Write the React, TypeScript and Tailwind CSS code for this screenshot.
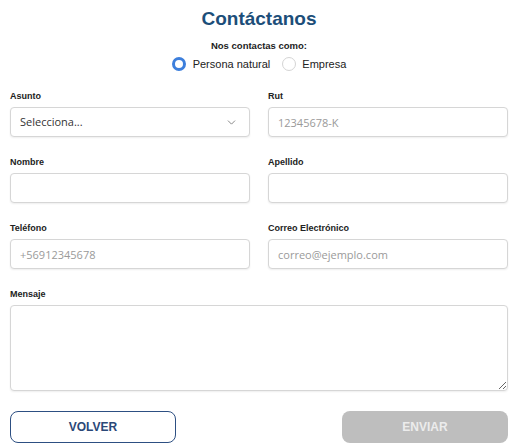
import { ChevronDown } from "lucide-react";

const Label = ({ children }: { children: React.ReactNode }) => (
  <label className="block text-[9px] leading-[12px] font-bold text-[#222]">
    {children}
  </label>
);

const inputCls =
  "mt-[5px] w-full h-[30px] px-[9px] rounded-[4px] border border-[#d6d6d6] bg-white text-[11px] text-[#333] placeholder:text-[#9a9a9a] shadow-[0_1px_2px_rgba(0,0,0,0.07)] outline-none";

const App = () => {
  return (
    <div className="w-[515px] min-h-[448px] bg-white pl-[10px] pr-[7px] pt-[8px] pb-[4px] font-['Liberation_Sans',Arial,sans-serif]">
      <h1 className="text-center text-[19px] leading-[22px] font-bold text-[#1c4e79]">
        Contáctanos
      </h1>
      <p className="mt-[10px] text-center text-[9.5px] leading-[12px] font-bold text-[#222]">
        Nos contactas como:
      </p>

      <div className="mt-[4px] flex justify-center items-center h-[16px] text-[11px] text-[#222]">
        <div className="flex items-center gap-[7px]">
          <span className="w-[14px] h-[14px] rounded-full border-[3px] border-[#3d7fdc] bg-white" />
          <span>Persona natural</span>
        </div>
        <div className="flex items-center gap-[6px] ml-[12px]">
          <span className="w-[14px] h-[14px] rounded-full border border-[#d4d4d4] bg-white" />
          <span>Empresa</span>
        </div>
      </div>

      <div className="mt-[18px] grid grid-cols-2 gap-x-[18px] gap-y-[19px]">
        <div>
          <Label>Asunto</Label>
          <div
            className={`${inputCls} flex items-center justify-between font-['Open_Sans',sans-serif] text-[#8a8a8a]`}
          >
            <span>Selecciona...</span>
            <ChevronDown className="w-[13px] h-[13px] text-[#777] mr-[2px]" strokeWidth={1.6} />
          </div>
        </div>
        <div>
          <Label>Rut</Label>
          <input className={`${inputCls} font-['Open_Sans',sans-serif]`} placeholder="12345678-K" />
        </div>

        <div>
          <Label>Nombre</Label>
          <input className={inputCls} />
        </div>
        <div>
          <Label>Apellido</Label>
          <input className={inputCls} />
        </div>

        <div>
          <Label>Teléfono</Label>
          <input className={`${inputCls} font-['Open_Sans',sans-serif]`} placeholder="+56912345678" />
        </div>
        <div>
          <Label>Correo Electrónico</Label>
          <input
            className={`${inputCls} font-['Open_Sans',sans-serif]`}
            placeholder="correo@ejemplo.com"
          />
        </div>

        <div className="col-span-2">
          <Label>Mensaje</Label>
          <textarea className="mt-[5px] block w-full h-[86px] rounded-[4px] border border-[#d6d6d6] bg-white p-[8px] text-[11px] shadow-[0_1px_2px_rgba(0,0,0,0.07)] outline-none" />
        </div>
      </div>

      <div className="mt-[20px] flex justify-between">
        <button className="w-[166px] h-[32px] rounded-[8px] border border-[#2d4f82] bg-white text-[12px] font-bold text-[#2a4878]">
          VOLVER
        </button>
        <button className="w-[166px] h-[32px] rounded-[8px] bg-[#bebebe] text-[12px] font-bold text-[#ececec]">
          ENVIAR
        </button>
      </div>
    </div>
  );
};

export default App;
